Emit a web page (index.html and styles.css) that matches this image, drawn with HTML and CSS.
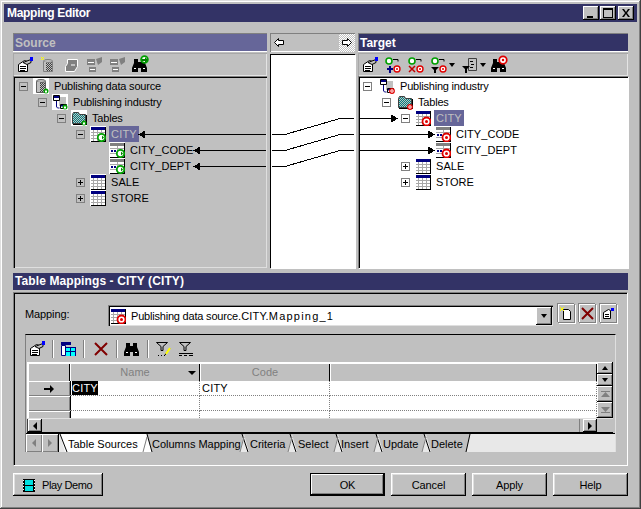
FILE: index.html
```html
<!DOCTYPE html>
<html lang="en">
<head>
<meta charset="utf-8">
<title>Mapping Editor</title>
<link rel="stylesheet" href="styles.css">
</head>
<body>
<svg class="defs" width="0" height="0" aria-hidden="true">
  <defs>
    <pattern id="dith" width="2" height="2" patternUnits="userSpaceOnUse"><rect width="2" height="2" fill="#c0c0c0"/><rect width="1" height="1" fill="#404040"/><rect x="1" y="1" width="1" height="1" fill="#404040"/></pattern>
    <pattern id="teal" width="2" height="2" patternUnits="userSpaceOnUse"><rect width="2" height="2" fill="#c0c0c0"/><rect width="1" height="1" fill="#008080"/><rect x="1" y="1" width="1" height="1" fill="#008080"/></pattern>
    <symbol id="tbl" viewBox="0 0 16 16"><path fill="#fff" d="M0 0h16v16H0z"/><path fill="#000" d="M1 15h15v1H1zM15 1h1v15h-1z"/><path fill="#000080" d="M1 1h14v3H1z"/><path fill="#fff" d="M1 4h14v11H1z"/><path stroke="#a8a8a8" stroke-width="1" d="M1 6.500h14M1 9.500h14M1 12.500h14M3.500 4v11M7.500 4v11M11.500 4v11"/></symbol>
    <symbol id="col" viewBox="0 0 16 16"><path fill="#fff" d="M0 0h16v16H0z"/><path fill="#000" d="M1 15h15v1H1zM15 1h1v15h-1z"/><path fill="#808080" d="M1 1h14v3H1z"/><path fill="#fff" d="M1 4h14v11H1z"/><path stroke="#a8a8a8" d="M1 6.500h14M1 11.500h14M8.500 4v11"/><path fill="#000080" d="M2 8h2v2H2zM5 8h2v2H5z"/></symbol>
    <symbol id="gbig" viewBox="0 0 16 16"><circle cx="11.500" cy="11.500" r="3.700" fill="#fff" stroke="#00a000" stroke-width="1.800"/><path fill="#fff" d="M10 9h2v5h-2z"/><path fill="#008000" d="M12 9.500l2 2-2 2z"/></symbol>
    <symbol id="gsm" viewBox="0 0 16 16"><circle cx="13" cy="13" r="2.500" fill="#00a000"/><path fill="#fff" d="M12 13h2v1h-2zM12.500 12h1v3h-1z"/></symbol>
    <symbol id="rbig" viewBox="0 0 16 16"><circle cx="11.500" cy="11.500" r="4" fill="#fff" stroke="#e00000" stroke-width="1.800"/><circle cx="11.500" cy="11.500" r="1.500" fill="#e00000"/></symbol>
    <symbol id="rsm" viewBox="0 0 16 16"><circle cx="13" cy="13" r="2.300" fill="#fff" stroke="#e00000" stroke-width="1.200"/><circle cx="13" cy="13" r=".7" fill="#e00000"/></symbol>
    <symbol id="db" viewBox="0 0 16 16"><path fill="#fff" d="M0 0h16v16H0z"/><path fill="url(#dith)" stroke="#606060" d="M3.500 3.500h9v11h-9z"/><ellipse cx="8" cy="3" rx="4.500" ry="1.500" fill="#c0c0c0" stroke="#606060"/><path fill="#c0c0c0" d="M4 4h3v10H4z"/></symbol>
    <symbol id="model" viewBox="0 0 16 16"><path fill="#fff" d="M0 0h16v16H0z"/><path fill="#c0c0c0" d="M7 3h7v9H7z"/><path fill="#fff" stroke="#000" d="M1.500 1.500h6v5h-6z"/><path fill="#000080" d="M2 2h5v2H2z"/><path stroke="#000080" fill="none" d="M4.500 7v5c0 2 1 2 3 2"/><path fill="#fff" stroke="#000" d="M8.500 10.500h6v4h-6z"/><path fill="#000080" d="M9 11h5v1.500H9z"/></symbol>
    <symbol id="folder" viewBox="0 0 16 16"><path fill="#fff" d="M0 0h16v16H0z"/><path fill="url(#teal)" stroke="#404040" d="M1.500 4.500l1-2h5l1 2h6v9h-13z"/><path fill="#000" d="M2 14h14v1H2zM15 5h1v10h-1z"/></symbol>
    <symbol id="props" viewBox="0 0 16 16"><path fill="#fff" stroke="#000" d="M1.500 7.500l6-4 3 1v10h-9z"/><path stroke="#000" d="M3 9.500h6M3 11.500h6M3 13.500h5"/><path fill="#c0c0c0" stroke="#000" d="M6 5.500l8-3v3l-4 2z"/><path fill="#0000ff" d="M13 0h3v4h-3z"/></symbol>
    <symbol id="binoc" viewBox="0 0 16 16"><path fill="#000" d="M2 2h4v3h3V2h4v4l2 5v4H9v-4H6v4H0v-4l2-5z"/><path fill="#fff" d="M2 11h2v1H2zM11 11h2v1h-2z"/></symbol>
    <symbol id="ring-g" viewBox="0 0 8 8"><circle cx="4" cy="4" r="3" fill="#fff" stroke="#00a000" stroke-width="1.600"/></symbol>
    <symbol id="ring-r" viewBox="0 0 8 8"><circle cx="4" cy="4" r="3" fill="#fff" stroke="#e00000" stroke-width="1.400"/><circle cx="4" cy="4" r="1" fill="#e00000"/></symbol>
    <symbol id="funnel" viewBox="0 0 16 16"><path fill="#c0c0c0" stroke="#000" d="M1.500 1.500h11l-4.500 4v4h-2v-4z"/></symbol>
  </defs>
</svg>
<div class="window">
  <div class="titlebar">
    <span class="title-text">Mapping Editor</span>
    <div class="caption-btns">
      <button class="cap"><svg width="14" height="12"><path d="M3 9h6v2H3z"/></svg></button>
      <button class="cap"><svg width="14" height="12"><path d="M2 1h10v10H2zM3 3v7h8V3z" fill-rule="evenodd"/></svg></button>
      <button class="cap cap-close"><svg width="14" height="12"><path d="M3 2h2l2 3 2-3h2L8 6l3 4H9L7 7l-2 3H3l3-4z"/></svg></button>
    </div>
  </div>
  <div class="client">
    <div class="panes">
      <section class="pane pane-source">
        <div class="head head-off">Source</div>
        <div class="tb tb-source">
          <svg class="ic16"><use href="#props"/></svg>
          <svg class="ic16"><path fill="url(#dith)" stroke="#808080" d="M3.500 4.500h9v10h-9z"/><ellipse cx="8" cy="4" rx="4.500" ry="1.500" fill="#c0c0c0" stroke="#808080"/><path fill="#c0c0c0" d="M4 5h2v9H4z"/><path stroke="#ffff00" d="M1 0l3 3M4 0L1 3"/></svg>
          <svg class="ic16"><path fill="#808080" stroke="#fff" d="M4.500 2.500h10v7l-3 5h-9v-5l2-3z"/><path fill="#c0c0c0" d="M8 7h4v2H8z"/></svg>
          <svg class="ic16"><path fill="#808080" d="M1 2h8v6H1zM3 10h7v5H3zM10 2l6-2v5l-4 3z"/><path stroke="#fff" d="M2 5.500h6M4 12.500h5"/></svg>
          <svg class="ic16"><path fill="#808080" d="M1 2h8v6H1zM3 10h7v5H3zM10 2l6-2v5l-4 3z"/><path stroke="#fff" d="M2 5.500h6M4 12.500h5"/></svg>
          <svg class="ic16"><use href="#binoc"/><svg x="8" y="-2" width="9" height="9"><use href="#ring-g"/></svg><path fill="#008000" d="M10 2h3V0l3 3-3 3V4h-3z"/></svg>
        </div>
        <div class="tree tree-off">
          <div class="row d0"><i class="tog minus"></i><svg class="ic16"><use href="#db"/><use href="#gsm"/></svg><span class="lbl">Publishing data source</span></div>
          <div class="row d1"><i class="tog minus"></i><svg class="ic16"><use href="#model"/><use href="#gsm"/></svg><span class="lbl">Publishing industry</span></div>
          <div class="row d2"><i class="tog minus"></i><svg class="ic16"><use href="#folder"/><use href="#gsm"/></svg><span class="lbl">Tables</span></div>
          <div class="row d3"><i class="tog minus"></i><svg class="ic16"><use href="#tbl"/><use href="#gbig"/></svg><span class="lbl sel caps">CITY</span></div>
          <div class="row d4"><svg class="ic16"><use href="#col"/><use href="#gbig"/></svg><span class="lbl caps">CITY_CODE</span></div>
          <div class="row d4"><svg class="ic16"><use href="#col"/><use href="#gbig"/></svg><span class="lbl caps">CITY_DEPT</span></div>
          <div class="row d3"><i class="tog plus"></i><svg class="ic16"><use href="#tbl"/></svg><span class="lbl caps">SALE</span></div>
          <div class="row d3"><i class="tog plus"></i><svg class="ic16"><use href="#tbl"/></svg><span class="lbl caps">STORE</span></div>
        </div>
      </section>
      <section class="pane pane-mid">
        <div class="mid-head">
          <svg class="mid-arrow" width="12" height="11"><path fill="#fff" stroke="#000" d="M1.500 5.500l4-4v2h5v4h-5v2z"/></svg>
          <span class="mid-btn"><svg width="12" height="11"><path fill="#fff" stroke="#000" d="M10.500 5.500l-4-4v2h-5v4h5v2z"/></svg></span>
        </div>
        <div class="mid-canvas"></div>
      </section>
      <section class="pane pane-target">
        <div class="head head-on">Target</div>
        <div class="tb tb-target">
          <svg class="ic16"><use href="#props"/></svg>
          <svg class="ic16"><svg x="0" y="0" width="8" height="8"><use href="#ring-g"/></svg><svg x="8" y="8" width="8" height="8"><use href="#ring-r"/></svg><path fill="none" stroke="#000" d="M8 2.500h5v2"/><path fill="#000080" d="M2 11h2V9h2v2h2v2H6v3H4v-3H2z"/></svg>
          <svg class="ic16"><svg x="0" y="0" width="8" height="8"><use href="#ring-g"/></svg><svg x="8" y="8" width="8" height="8"><use href="#ring-r"/></svg><path fill="none" stroke="#000" d="M8 2.500h5v2"/><path stroke="#c00000" stroke-width="1.500" d="M1 9l6 6M7 9l-6 6"/></svg>
          <span class="tb-drop"><svg class="ic16"><svg x="0" y="0" width="8" height="8"><use href="#ring-g"/></svg><svg x="8" y="8" width="8" height="8"><use href="#ring-r"/></svg><path fill="none" stroke="#000" d="M8 2.500h5v2"/><path d="M0 10h8l-3 3v3H3v-3z"/></svg><i class="tri-d"></i></span>
          <span class="tb-drop tb-drop2"><svg class="ic16"><path fill="#c0c0c0" stroke="#404040" d="M6.500 1.500h8v12h-8z"/><path stroke="#000" d="M8 4.500h3M9 7.500h3M8 10.500h3"/><path d="M0 9h8l-3 3v4H3v-4z"/></svg><i class="tri-d"></i></span>
          <svg class="ic16"><use href="#binoc"/><svg x="7" y="-2" width="10" height="10"><use href="#ring-r"/></svg></svg>
        </div>
        <div class="tree tree-on">
          <div class="row d0"><i class="tog minus"></i><svg class="ic16"><use href="#model"/><use href="#rsm"/></svg><span class="lbl">Publishing industry</span></div>
          <div class="row d1"><i class="tog minus"></i><svg class="ic16"><use href="#folder"/><use href="#rsm"/></svg><span class="lbl">Tables</span></div>
          <div class="row d2"><i class="tog minus"></i><svg class="ic16"><use href="#tbl"/><use href="#rbig"/></svg><span class="lbl sel caps">CITY</span></div>
          <div class="row d3"><svg class="ic16"><use href="#col"/><use href="#rbig"/></svg><span class="lbl caps">CITY_CODE</span></div>
          <div class="row d3"><svg class="ic16"><use href="#col"/><use href="#rbig"/></svg><span class="lbl caps">CITY_DEPT</span></div>
          <div class="row d2"><i class="tog plus"></i><svg class="ic16"><use href="#tbl"/></svg><span class="lbl caps">SALE</span></div>
          <div class="row d2"><i class="tog plus"></i><svg class="ic16"><use href="#tbl"/></svg><span class="lbl caps">STORE</span></div>
        </div>
      </section>
      <svg class="links" viewBox="13 33 615 235" width="615" height="235" aria-hidden="true">
        <g fill="none" stroke="#000" stroke-width="1">
          <path d="M145 134.500H266M200 150.500H266M200 166.500H266"/>
          <path d="M272 134.500H285L340 118.500H354M360 118.500H392"/>
          <path d="M272 150.500H285L340 134.500H354M360 134.500H430"/>
          <path d="M272 166.500H285L340 150.500H354M360 150.500H430"/>
        </g>
        <path d="M138 134.500l7-4v8zM193 150.500l7-4v8zM193 166.500l7-4v8zM398 118.500l-7-4v8zM435 134.500l-7-4v8zM435 150.500l-7-4v8z"/>
      </svg>
    </div>
    <div class="head head-on head-map">Table Mappings - CITY (CITY)</div>
    <div class="panel">
      <div class="map-row">
        <span class="map-label">Mapping:</span>
        <div class="combo">
          <svg class="ic16"><use href="#tbl"/><use href="#rbig"/></svg>
          <span class="combo-text"><span class="ct-a">Publishing data source</span><span class="ct-b">.CITY.</span><span class="ct-c">Mapping_1</span></span>
          <span class="combo-btn"><i class="tri-d"></i></span>
        </div>
        <button class="sq"><svg width="13" height="15"><path fill="#fff" stroke="#000" d="M3.500 3.500h5l2 2v8h-7z"/><path stroke="#ffff00" d="M0 1l4 4M4 1L0 5"/></svg></button>
        <button class="sq"><svg width="13" height="13"><path stroke="#800000" stroke-width="2" d="M1 1l11 11M12 1L1 12"/></svg></button>
        <button class="sq"><svg width="13" height="13"><path fill="#fff" stroke="#000" d="M1.500 5.500l5-3 2 1v8h-7z"/><path stroke="#000" d="M3 7.500h4M3 9.500h4"/><path fill="#0000ff" d="M9 1h3v3H9z"/></svg></button>
      </div>
      <div class="frame">
        <div class="grid-tb">
          <svg class="ic16"><use href="#props"/></svg>
          <i class="sep"></i>
          <svg class="ic16"><path fill="#000080" d="M1 1h10v3H1z"/><path fill="#fff" stroke="#000080" d="M1.500 4.500h4v10h-4z"/><path fill="#00ffff" d="M6 7h10v8H6z"/><path stroke="#000080" d="M6 6.500h10M6 10.500h10M10.500 7v8M15.500 7v8"/><path fill="#000080" d="M6 10h4v1H6z"/></svg>
          <i class="sep"></i>
          <svg class="ic16 g-x"><path stroke="#800000" stroke-width="2" d="M2 2l12 12M14 2L2 14"/></svg>
          <i class="sep"></i>
          <svg class="ic16"><use href="#binoc"/></svg>
          <i class="sep sep-last"></i>
          <svg class="ic16"><use href="#funnel"/><path d="M3 14h1v1H3zM6 14h1v1H6zM9 14h1v1H9z"/><path stroke="#000" d="M10 14l5-7"/><path stroke="#ffff00" stroke-width="2" d="M11 13l4-6"/></svg>
          <svg class="ic16"><use href="#funnel"/><path stroke="#000" d="M1 12.500h14M1 14.500h3M6 14.500h3M11 14.500h4"/></svg>
        </div>
        <div class="grid-wrap">
          <div class="grid-main">
            <div class="gr gr-head">
              <div class="gh"></div>
              <div class="gh gh-name">Name<i class="tri-d"></i></div>
              <div class="gh">Code</div>
              <div class="gh"></div>
            </div>
            <div class="gr gr-row">
              <div class="rh"><svg width="10" height="8"><path d="M0 3h6V0l4 4-4 4V5H0z"/></svg></div>
              <div class="gc"><span class="cell-sel">CITY</span></div>
              <div class="gc">CITY</div>
              <div class="gc"></div>
            </div>
            <div class="gr gr-row"><div class="rh"></div><div class="gc"></div><div class="gc"></div><div class="gc"></div></div>
            <div class="gr gr-row"><div class="rh"></div><div class="gc"></div><div class="gc"></div><div class="gc"></div></div>
          </div>
          <div class="vbar">
            <span class="sb sb-s"><i class="tri-u"></i></span>
            <span class="sb sb-s"><i class="tri-d"></i></span>
            <span class="sb sb-l"><svg width="9" height="8"><path fill="#808080" d="M0 1h9v1H0zM4.500 2L9 7H0z"/></svg></span>
            <span class="sb sb-l"><svg width="9" height="8"><path fill="#808080" d="M0 7h9v-1H0zM4.500 6L9 1H0z"/></svg></span>
          </div>
          <div class="hbar">
            <span class="sb sb-h"><i class="tri-l"></i></span>
            <span class="h-track"></span>
            <span class="sb sb-h"><i class="tri-r"></i></span>
          </div>
        </div>
        <div class="tabs">
          <span class="sb sb-tab"><i class="tri-l tri-off"></i></span>
          <span class="sb sb-tab"><i class="tri-r tri-off"></i></span>
          <div class="tab-row">
            <span class="tab tab-on t1">Table Sources</span>
            <span class="tab t2">Columns Mapping</span>
            <span class="tab t3">Criteria</span>
            <span class="tab t4">Select</span>
            <span class="tab t5">Insert</span>
            <span class="tab t6">Update</span>
            <span class="tab t7">Delete</span>
            <svg class="tab-lines" viewBox="59 0 412 18" width="412" height="18" aria-hidden="true">
              <g fill="#fff" stroke="none"><path d="M146 4l-4 14h9z"/></g>
              <g fill="#e8e8e8" stroke="none"><path d="M243 4l-4 14h9zM291 4l-4 14h9zM337 4l-4 14h9zM377 4l-4 14h9zM425 4l-4 14h9z"/></g>
              <g fill="none" stroke="#000">
                <path d="M59 0l7 18M146 0l5 18M241 0l6 18M289 0l6 18M335 0l6 18M375 0l6 18M423 0l6 18"/>
              </g>
              <g fill="none" stroke="#808080">
                <path d="M146 3l-4 15M243 3l-4 15M291 3l-4 15M337 3l-4 15M377 3l-4 15M425 3l-4 15"/>
                <path d="M469 0l-4 18" stroke="#000"/>
              </g>
            </svg>
          </div>
        </div>
      </div>
    </div>
    <div class="footer">
      <button class="btn btn-demo"><svg class="ic16"><path d="M3 2h12v13H3z"/><path fill="#00e0e0" d="M5 3h8v5H5zM5 9h8v5H5z"/><path fill="#fff" d="M3 3h1v1H3zM3 6h1v1H3zM3 9h1v1H3zM3 12h1v1H3zM14 3h1v1h-1zM14 6h1v1h-1zM14 9h1v1h-1zM14 12h1v1h-1z"/></svg>Play Demo</button>
      <div class="footer-right">
        <button class="btn btn-default">OK</button>
        <button class="btn">Cancel</button>
        <button class="btn">Apply</button>
        <button class="btn">Help</button>
      </div>
    </div>
  </div>
</div>
</body>
</html>
```
FILE: styles.css
```css
* { box-sizing: border-box; }
html, body { margin: 0; padding: 0; }
body { width: 641px; height: 509px; background: #c0c0c0; font: 11px/14px "Liberation Sans", Arial, sans-serif; color: #000; overflow: hidden; }
.defs { position: absolute; }
button { font: inherit; color: inherit; padding: 0; border: 0; background: #c0c0c0; }
.window { width: 641px; height: 509px; padding: 4px; background: #c0c0c0; box-shadow: inset -1px -1px 0 #404040, inset 1px 1px 0 #dfdfdf, inset -2px -2px 0 #808080, inset 2px 2px 0 #fff; }
.titlebar { height: 18px; background: #333366; display: flex; align-items: center; justify-content: space-between; padding: 0 3px 0 3px; }
.title-text { color: #fff; font-weight: 700; font-size: 12px; letter-spacing: -.3px; }
.caption-btns { display: flex; gap: 1px; }
.cap { width: 16px; height: 14px; display: flex; align-items: center; justify-content: center; box-shadow: inset -1px -1px 0 #000, inset 1px 1px 0 #fff, inset -2px -2px 0 #808080; }
.cap svg { display: block; }
.cap-close { margin-left: 1px; }
.client { padding: 11px 9px 0; }
.panes { position: relative; display: flex; gap: 3px; height: 235px; }
.pane { display: flex; flex-direction: column; }
.pane-source { width: 254px; }
.pane-mid { width: 85px; }
.pane-target { width: 270px; }
.head { height: 19px; padding: 3px 0 0 2px; font-weight: 700; font-size: 12px; border-bottom: 1px solid #fff; box-shadow: inset 1px 1px 0 #808080; }
.head-off { background: #666699; color: #c0c0c0; }
.head-on { background: #333366; color: #fff; }
.head-map { margin-top: 5px; height: 17px; padding: 1px 0 0 2px; border-bottom: 0; box-shadow: none; width: 615px; letter-spacing: .1px; }
.tb { height: 23px; margin-top: 1px; display: flex; align-items: center; box-shadow: inset 1px 1px 0 #a8a8a8, inset -1px -1px 0 #e4e4e4; }
.tb-source { gap: 7px; padding-left: 4px; }
.tb-target { gap: 7px; padding-left: 4px; }
.ic16 { width: 16px; height: 16px; display: block; flex: none; overflow: visible; }
.tb-drop { display: flex; align-items: center; gap: 2px; width: 24px; }
.tb-drop2 { width: 22px; }
.tree { height: 192px; padding-top: 1px; border-top: 1px solid #808080; border-left: 1px solid #808080; box-shadow: inset 1px 1px 0 #000, inset -1px -1px 0 #dfdfdf; }
.tree-off { background: #c0c0c0; }
.tree-on { background: #fff; box-shadow: inset 1px 1px 0 #000, 1px 1px 0 #fff; }
.row { display: flex; align-items: center; height: 16px; white-space: nowrap; }
.d0 { padding-left: 5px; }
.d1 { padding-left: 24px; }
.d2 { padding-left: 43px; }
.d3 { padding-left: 62px; }
.d4 { padding-left: 95px; }
.tree-on .d0 { padding-left: 4px; }
.tree-on .d1 { padding-left: 23px; }
.tree-on .d2 { padding-left: 42px; }
.tree-on .d3 { padding-left: 76px; }
.tog { position: relative; display: block; flex: none; width: 9px; height: 9px; margin-right: 5px; border: 1px solid #808080; }
.tree-on .d0 .tog { margin-right: 7px; }
.tree-on .d1 .tog { margin-right: 6px; }
.tog::before { content: ""; position: absolute; left: 1px; top: 3px; width: 5px; height: 1px; background: #000; }
.plus::after { content: ""; position: absolute; left: 3px; top: 1px; width: 1px; height: 5px; background: #000; }
.lbl { margin-left: 3px; padding: 0 2px; line-height: 16px; letter-spacing: -.2px; }
.caps { letter-spacing: .05px; }
.sel { background: #666699; color: #c0c0c0; letter-spacing: .2px; }
.mid-head { position: relative; height: 19px; display: flex; align-items: center; justify-content: space-between; padding-left: 3px; box-shadow: inset 1px 1px 0 #808080, inset -1px -1px 0 #fff; }
.mid-arrow { display: block; }
.mid-btn { width: 16px; height: 18px; display: flex; align-items: center; justify-content: center; background: repeating-conic-gradient(#fff 0 25%, #c0c0c0 0 50%) 0 0 / 2px 2px; }
.mid-canvas { margin-top: 2px; height: 214px; background: #fff; box-shadow: inset 1px 1px 0 #000, 1px 1px 0 #fff; }
.links { position: absolute; left: 0; top: 0; pointer-events: none; shape-rendering: crispEdges; }
.panel { margin-top: 2px; width: 615px; height: 174px; border-top: 1px solid #808080; border-left: 1px solid #808080; border-right: 1px solid #fff; border-bottom: 1px solid #fff; box-shadow: inset 1px 1px 0 #000; padding: 11px 0 0 11px; }
.map-row { display: flex; align-items: flex-start; height: 30px; }
.map-label { width: 83px; padding-top: 3px; letter-spacing: -.1px; }
.combo { width: 445px; height: 21px; margin-top: 1px; background: #fff; display: flex; align-items: center; padding-left: 2px; box-shadow: inset 1px 1px 0 #808080, inset 2px 2px 0 #000, inset -1px -1px 0 #dfdfdf; position: relative; }
.combo-text { margin-left: 5px; white-space: nowrap; }
.ct-a { letter-spacing: -.2px; }
.ct-b { letter-spacing: .2px; }
.ct-c { letter-spacing: 1.2px; }
.combo-btn { position: absolute; right: 1px; top: 2px; width: 16px; height: 18px; display: flex; align-items: center; justify-content: center; background: #c0c0c0; box-shadow: inset -1px -1px 0 #000, inset 1px 1px 0 #fff, inset -2px -2px 0 #808080; }
.sq { width: 17px; height: 19px; margin-left: 4px; display: flex; align-items: center; justify-content: center; box-shadow: inset -1px -1px 0 #808080, inset 1px 1px 0 #fff, 1px 1px 0 #fff, -1px -1px 0 #808080; flex: none; }
.map-row .sq:first-of-type { margin-left: 5px; }
.sq svg { display: block; }
.frame { width: 591px; height: 118px; border-top: 1px solid #000; border-left: 1px solid #808080; border-right: 1px solid #dfdfdf; padding-left: 1px; }
.grid-tb { height: 27px; display: flex; align-items: center; gap: 7px; padding-left: 2px; }
.sep { display: block; width: 2px; height: 18px; margin-right: -1px; background: linear-gradient(90deg, #808080 50%, #fff 50%); }
.sep-last { margin-right: -1px; }
.g-x { margin-left: 2px; }
.grid-wrap { width: 586px; height: 71px; position: relative; display: grid; grid-template-columns: 570px 16px; grid-template-rows: 56px 15px; box-shadow: inset 1px 1px 0 #404040; }
.grid-main { background: #fff; overflow: hidden; grid-column: 1; grid-row: 1; padding: 1px 0 0 1px; }
.gr { display: grid; grid-template-columns: 42px 130px 130px 1fr; }
.gr-head { height: 18px; border-bottom: 1px solid #000; }
.gh { height: 18px; background: #c0c0c0; color: #808080; text-align: center; line-height: 18px; position: relative; box-shadow: inset 1px 1px 0 #fff, inset -1px 0 0 #000; }
.gh-name .tri-d { position: absolute; right: 4px; top: 8px; border-top-width: 4px; border-left-width: 4px; border-right-width: 4px; }
.gr-row { height: 15px; line-height: 14px; }
.rh { background: #c0c0c0; box-shadow: inset 1px 1px 0 #fff, inset -1px -1px 0 #808080, 1px 0 0 #000; display: flex; align-items: center; justify-content: center; }
.gc { border-right: 1px dotted #808080; border-bottom: 1px dotted #808080; padding-left: 2px; letter-spacing: .2px; }
.cell-sel { background: #000; color: #fff; display: inline-block; height: 14px; }
.vbar { grid-column: 2; grid-row: 1; display: flex; flex-direction: column; }
.sb { display: flex; align-items: center; justify-content: center; background: #c0c0c0; flex: none; box-shadow: inset -1px -1px 0 #000, inset 1px 1px 0 #fff, inset -2px -2px 0 #808080; }
.sb svg { display: block; }
.sb-s { height: 12px; }
.sb-l { height: 16px; }
.hbar { grid-column: 1 / 3; grid-row: 2; display: flex; align-items: stretch; padding-left: 1px; padding-right: 16px; border-top: 1px solid #dfdfdf; border-bottom: 1px solid #000; }
.sb-h { width: 14px; }
.h-track { flex: 1; margin: 0 3px 0 0; box-shadow: inset -1px 0 0 #808080; }
.tabs { height: 19px; display: flex; background: #e8e8e8; border-top: 1px solid #000; margin-left: -1px; }
.sb-tab { width: 16px; height: 18px; box-shadow: inset 1px 1px 0 #fff, inset -1px -1px 0 #808080, 1px 0 0 #000; }
.tab-row { position: relative; display: flex; margin-left: 2px; height: 18px; }
.tab { height: 18px; line-height: 20px; background: #c0c0c0; clip-path: polygon(0 0, 100% 0, calc(100% - 4px) 100%, 5px 100%); white-space: nowrap; padding-left: 5px; }
.tab-on { background: #fff; padding-left: 8px; }
.t1 { width: 87px; }
.t2 { width: 97px; }
.t3 { width: 48px; padding-left: 6px; }
.t4 { width: 46px; padding-left: 6px; }
.t5 { width: 40px; padding-left: 3px; }
.t6 { width: 48px; }
.t7 { width: 44px; }
.tab-lines { position: absolute; left: 0; top: 0; pointer-events: none; overflow: visible; }
i[class^="tri-"] { display: block; width: 0; height: 0; border-style: solid; border-color: transparent; }
.tri-d { border-width: 4px 3.500px 0; border-top-color: #000 !important; }
.tb-drop .tri-d { margin-top: 1px; }
.tri-u { border-width: 0 3.500px 4px; border-bottom-color: #000 !important; }
.tri-l { border-width: 4px 4px 4px 0; border-right-color: #000 !important; }
.tri-r { border-width: 4px 0 4px 4px; border-left-color: #000 !important; }
.tri-off.tri-l { border-right-color: #808080 !important; }
.tri-off.tri-r { border-left-color: #808080 !important; }
.footer { display: flex; justify-content: space-between; margin-top: 7px; width: 615px; }
.footer-right { display: flex; gap: 6px; }
.btn { width: 75px; height: 23px; letter-spacing: -.1px; box-shadow: inset -1px -1px 0 #000, inset 1px 1px 0 #fff, inset -2px -2px 0 #808080, inset 2px 2px 0 #dfdfdf; }
.btn-demo { width: 90px; display: flex; align-items: center; padding-left: 7px; gap: 6px; letter-spacing: -.4px; }
.btn-default { box-shadow: inset 0 0 0 1px #000, inset -2px -2px 0 #000, inset 2px 2px 0 #fff, inset -3px -3px 0 #808080; }
```
